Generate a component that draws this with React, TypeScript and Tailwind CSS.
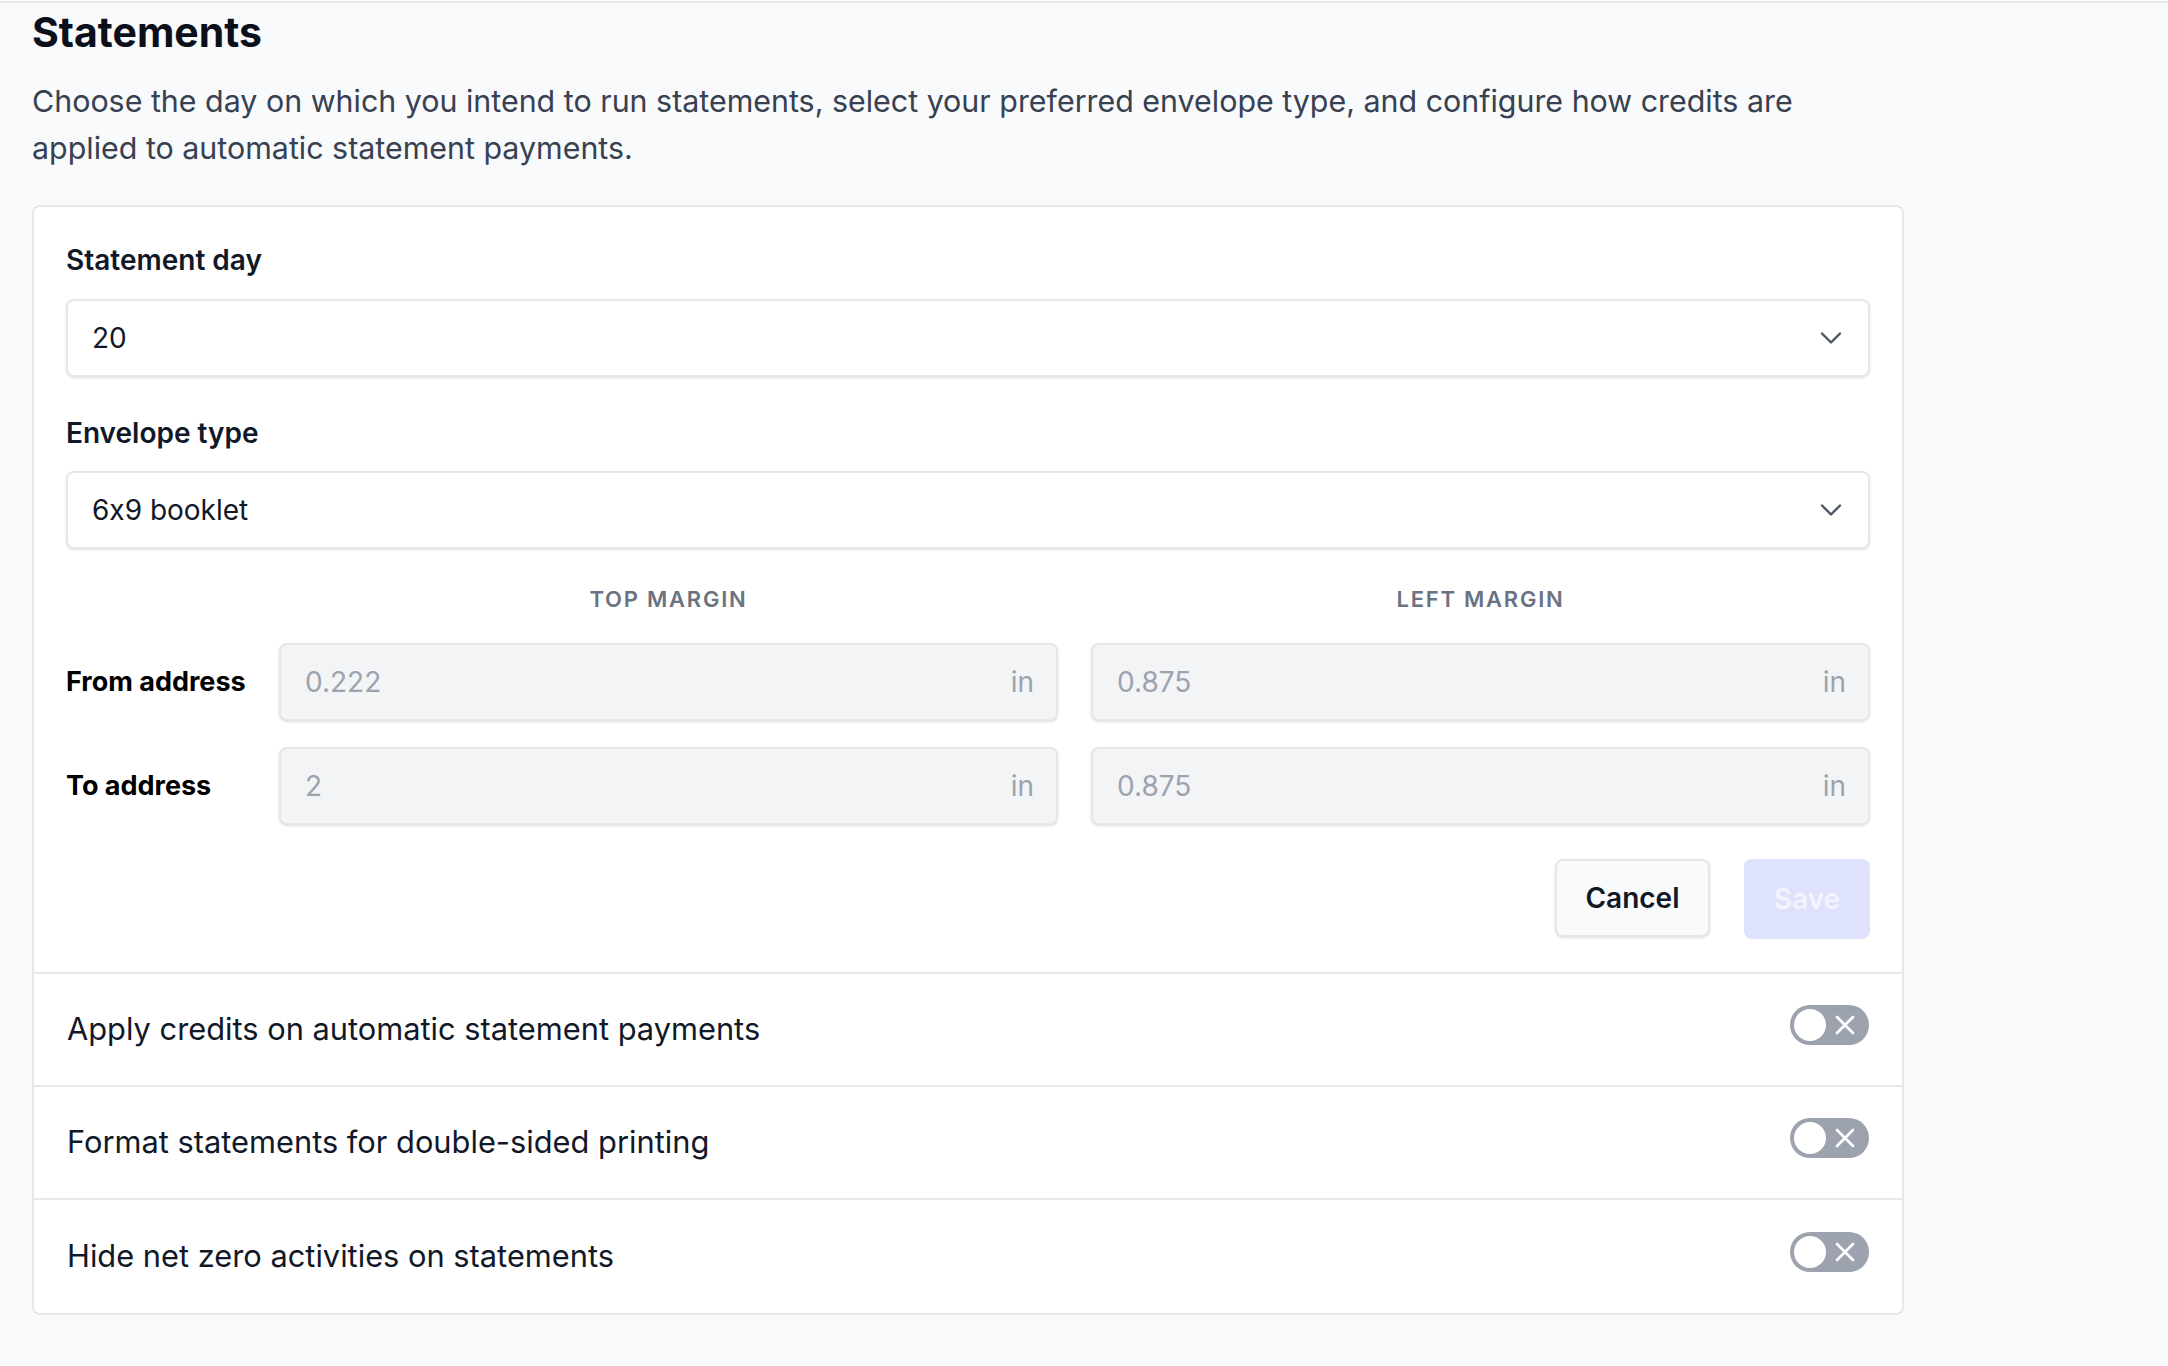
import React from "react";
import { ChevronDown } from "lucide-react";

const font = { fontFamily: 'Inter, "Noto Sans", sans-serif' };

function Select({ value }: { value: string }) {
  return (
    <div className="flex h-[78px] items-center justify-between rounded-[8px] border-2 border-[#e5e7eb] bg-white pl-[24px] pr-[19px] shadow-sm">
      <span className="text-[28px] text-[#111827]">{value}</span>
      <ChevronDown size={36} strokeWidth={1.6} color="#4b5563" />
    </div>
  );
}

function NumInput({ value }: { value: string }) {
  return (
    <div className="flex h-[78px] items-center justify-between rounded-[8px] border-2 border-[#e5e7eb] bg-[#f3f4f6] pl-[24px] pr-[22px] shadow-sm">
      <span className="text-[28px] text-[#9ca3af]">{value}</span>
      <span className="text-[28px] text-[#9ca3af]">in</span>
    </div>
  );
}

function Toggle() {
  return (
    <div className="mb-[9px] flex h-[40px] w-[79px] items-center rounded-full bg-[#9ca3af] pl-[4px]">
      <div className="h-[32px] w-[32px] rounded-full bg-white" />
      <svg className="ml-[9px]" width="20" height="20" viewBox="0 0 20 20">
        <path d="M2 2 L18 18 M18 2 L2 18" stroke="white" strokeWidth="2.6" strokeLinecap="round" />
      </svg>
    </div>
  );
}

function ToggleRow({ label, last }: { label: string; last?: boolean }) {
  return (
    <div className={"flex h-[113px] items-center justify-between px-[33px]" + (last ? "" : " border-b-2 border-[#e5e7eb]")}>
      <span className="text-[30.8px] text-[#111827]">{label}</span>
      <Toggle />
    </div>
  );
}

export default function App() {
  return (
    <div className="min-h-[1366px] w-full bg-[#f9fafb] [font-feature-settings:'calt'_0]" style={font}>
      <div className="mt-[1px] h-[3px] w-full border-t-[2px] border-[#e5e7eb]" />
      <div className="ml-[32px] w-[1872px]">
        <h1 className="mt-[2px] text-[41px] font-bold leading-[52px] text-[#0b0f19]">Statements</h1>
        <p className="mt-[20px] max-w-[1800px] text-[30.4px] leading-[47px] text-[#374151]">
          Choose the day on which you intend to run statements, select your preferred envelope type, and configure how credits are applied to automatic statement payments.
        </p>
        <div className="mt-[33px] overflow-hidden rounded-[8px] border-2 border-[#e5e7eb] bg-white">
          <div className="border-b-2 border-[#e5e7eb] px-[32px] pt-[33px] pb-[33px]">
            <div className="text-[28px] font-semibold leading-[40px] text-[#111827]">Statement day</div>
            <div className="mt-[19px]">
              <Select value="20" />
            </div>
            <div className="mt-[36px] text-[28px] font-semibold leading-[40px] text-[#111827]">Envelope type</div>
            <div className="mt-[18px]">
              <Select value="6x9 booklet" />
            </div>
            <div className="mt-[34px] grid grid-cols-[180px_1fr_1fr] gap-x-[33px]">
              <div />
              <div className="text-center text-[22px] font-semibold uppercase leading-[32px] tracking-[0.08em] text-[#6b7280]">Top margin</div>
              <div className="text-center text-[22px] font-semibold uppercase leading-[32px] tracking-[0.08em] text-[#6b7280]">Left margin</div>
            </div>
            <div className="mt-[28px] grid grid-cols-[180px_1fr_1fr] items-center gap-x-[33px] gap-y-[26px]">
              <div className="whitespace-nowrap text-[27px] font-bold text-black">From address</div>
              <NumInput value="0.222" />
              <NumInput value="0.875" />
              <div className="whitespace-nowrap text-[27px] font-bold text-black">To address</div>
              <NumInput value="2" />
              <NumInput value="0.875" />
            </div>
            <div className="mt-[34px] flex justify-end gap-[34px]">
              <button className="h-[78px] w-[155px] rounded-[8px] border-2 border-[#e5e7eb] bg-[#f9fafb] text-[28px] font-semibold text-[#111827] shadow-sm">
                Cancel
              </button>
              <button className="h-[80px] w-[126px] rounded-[8px] bg-[#dfe2fc] text-[28px] font-semibold text-[#f3f4fe]">
                Save
              </button>
            </div>
          </div>
          <ToggleRow label="Apply credits on automatic statement payments" />
          <ToggleRow label="Format statements for double-sided printing" />
          <ToggleRow label="Hide net zero activities on statements" last />
        </div>
      </div>
    </div>
  );
}
